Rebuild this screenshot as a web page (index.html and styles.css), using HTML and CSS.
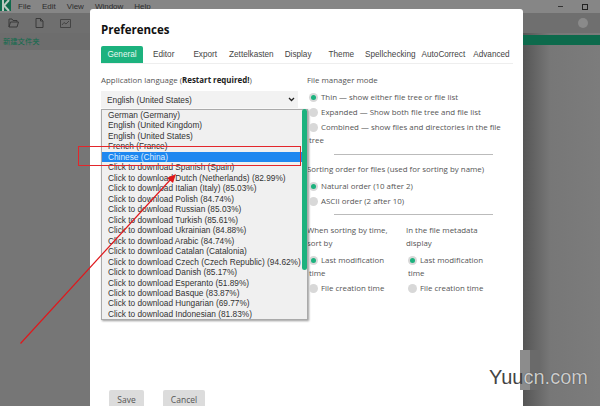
FILE: index.html
```html
<!DOCTYPE html>
<html lang="en">
<head>
<meta charset="utf-8">
<title>Preferences</title>
<link rel="stylesheet" href="styles.css">
</head>
<body>
<div class="app">
  <header class="titlebar">
    <div class="logo"><svg width="11" height="13" viewBox="0 0 11 13"><path d="M3 1v11M9 1 4 6.500 9 12" fill="none" stroke="#b9c9c0" stroke-width="2"/></svg></div>
    <nav class="menu"><span>File</span><span>Edit</span><span>View</span><span>Window</span><span>Help</span></nav>
    <div class="winctl"><span class="min"></span><span class="max"></span></div>
  </header>
  <div class="toolbar">
    <svg class="tool" width="11" height="10" viewBox="0 0 11 10"><path d="M1 9V1h3l1 1.500h4V4M1 9l1.500-5h8L9 9z" fill="none" stroke="#3a3a3a" stroke-width="1"/></svg>
    <svg class="tool" width="9" height="10" viewBox="0 0 9 10"><path d="M1 .5h4.500L8 3v6.500H1zM5.500 .5V3H8" fill="none" stroke="#3a3a3a" stroke-width="1"/></svg>
    <svg class="tool" width="11" height="9" viewBox="0 0 11 9"><path d="M.5 .5h10v8H.5zM2 6l2-2.500L6 5l3-3" fill="none" stroke="#3a3a3a" stroke-width=".8"/></svg>
    <div class="search-dot"></div>
  </div>
  <div class="workspace">
    <aside class="sidebar"><div class="folder">新建文件夹</div></aside>
    <main class="editor"><div class="greenbar"></div></main>
  </div>
</div>

<section class="dialog">
  <h1 class="title">Preferences</h1>
  <div class="tabs">
    <span class="tab active">General</span><span class="tab t-editor">Editor</span><span class="tab t-export">Export</span><span class="tab t-zk">Zettelkasten</span><span class="tab t-display">Display</span><span class="tab t-theme">Theme</span><span class="tab t-spell">Spellchecking</span><span class="tab t-auto">AutoCorrect</span><span class="tab t-adv">Advanced</span>
  </div>
  <div class="columns">
    <div class="col-left">
      <p class="label">Application language (<b>Restart required!</b>)</p>
      <div class="select">English (United States)<svg width="7" height="5" viewBox="0 0 7 5"><path d="M1 1l2.500 2.500L6 1" fill="none" stroke="#222" stroke-width="1.300"/></svg></div>
      <div class="dropdown">
        <div>German (Germany)</div>
        <div>English (United Kingdom)</div>
        <div>English (United States)</div>
        <div>French (France)</div>
        <div class="sel">Chinese (China)</div>
        <div>Click to download Spanish (Spain)</div>
        <div>Click to download Dutch (Netherlands) (82.99%)</div>
        <div>Click to download Italian (Italy) (85.03%)</div>
        <div>Click to download Polish (84.74%)</div>
        <div>Click to download Russian (85.03%)</div>
        <div>Click to download Turkish (85.61%)</div>
        <div>Click to download Ukrainian (84.88%)</div>
        <div>Click to download Arabic (84.74%)</div>
        <div>Click to download Catalan (Catalonia)</div>
        <div>Click to download Czech (Czech Republic) (94.62%)</div>
        <div>Click to download Danish (85.17%)</div>
        <div>Click to download Esperanto (51.89%)</div>
        <div>Click to download Basque (83.87%)</div>
        <div>Click to download Hungarian (69.77%)</div>
        <div>Click to download Indonesian (81.83%)</div>
      </div>
      <div class="scrollbar"></div>
    </div>
    <div class="col-right">
      <p class="label">File manager mode</p>
      <div class="radio on"><i></i>Thin — show either file tree or file list</div>
      <div class="radio"><i></i>Expanded — Show both file tree and file list</div>
      <div class="radio wrap"><i></i>Combined — show files and directories in the file tree</div>
      <hr class="rule">
      <p class="label">Sorting order for files (used for sorting by name)</p>
      <div class="radio on"><i></i>Natural order (10 after 2)</div>
      <div class="radio"><i></i>ASCII order (2 after 10)</div>
      <hr class="rule">
      <div class="pair">
        <div class="pair-col">
          <p class="label">When sorting by time, sort by</p>
          <div class="radio wrap on"><i></i>Last modification time</div>
          <div class="radio"><i></i>File creation time</div>
        </div>
        <div class="pair-col">
          <p class="label">In the file metadata display</p>
          <div class="radio wrap on"><i></i>Last modification time</div>
          <div class="radio"><i></i>File creation time</div>
        </div>
      </div>
    </div>
  </div>
  <div class="actions"><button class="btn">Save</button><button class="btn btn-cancel">Cancel</button></div>
</section>

<div class="marker"></div>
<svg class="arrow" width="600" height="406" viewBox="0 0 600 406"><path d="M20.500 343.500 171 179" fill="none" stroke="#e0181c" stroke-width="1.200"/><path d="M176 174l-3 9-6-5z" fill="#e0181c"/></svg>
<div class="wm-block"></div>
<div class="watermark">Yuu<span class="wm-light">cn.com</span></div>
</body>
</html>
```
FILE: styles.css
```css
* { box-sizing: border-box; }
html, body { margin: 0; padding: 0; width: 600px; height: 406px; overflow: hidden; }
body { position: relative; font-family: "Open Sans", sans-serif; color: #333; background: #7a7a7a; }

.app { display: flex; flex-direction: column; height: 406px; }
.titlebar { display: flex; align-items: center; height: 13px; background: #868686; font: 8px "Liberation Sans", sans-serif; color: #2c2c2c; }
.logo { width: 11px; height: 11px; align-self: flex-start; background: #0f6a4c; display: flex; align-items: center; justify-content: center; overflow: hidden; }
.menu { display: flex; gap: 11px; margin-left: 7px; }
.winctl { margin-left: auto; display: flex; align-items: center; gap: 19px; margin-right: 12px; }
.min { width: 5px; height: 1px; background: #333; }
.max { width: 6px; height: 6px; border: 1px solid #222; }
.toolbar { display: flex; align-items: center; gap: 16px; height: 20px; padding: 0 0 0 8px; background: #6f6f6f; }
.tool { flex: none; }
.search-dot { width: 10px; height: 10px; margin-left: auto; margin-right: 12px; border-radius: 50%; background: #8a8a8a; }
.workspace { flex: 1; display: flex; min-height: 0; }
.sidebar { width: 90px; background: #767676; }
.folder { height: 17px; padding-left: 3px; background: #6d6d6d; font: 7.300px/17px "Noto Sans CJK SC", sans-serif; color: #0d6b4c; }
.editor { flex: 1; background: linear-gradient(90deg, #555 433px, #777 460px, #7c7c7c 100%); }
.greenbar { height: 10px; margin-top: 2px; background: #0d6a4c; }

.dialog { position: absolute; left: 90px; top: 9px; width: 433px; height: 397px; padding: 11px 10px 0 11px; background: #fff; border-radius: 3px 3px 0 0; display: flex; flex-direction: column; overflow: hidden; }
.title { margin: 0; font: 700 11.500px/20px "Open Sans", sans-serif; color: #111; }
.tabs { display: flex; height: 18px; margin-top: 6px; border-bottom: 1px solid #eee; font: 8.200px/17px "Liberation Sans", sans-serif; color: #444; }
.tab { flex: none; }
.tab.active { width: 42px; height: 17px; text-align: center; background: #1cb27e; color: #e8f7f1; border-radius: 2px 2px 0 0; }
.t-editor { margin-left: 10px; }
.t-export { margin-left: 19px; }
.t-zk { margin-left: 12px; }
.t-display { margin-left: 11px; }
.t-theme { margin-left: 17px; }
.t-spell { margin-left: 11px; }
.t-auto { margin-left: 6px; }
.t-adv { margin-left: 8px; }

.columns { display: flex; gap: 10px; margin-top: 10px; flex: 1; min-height: 0; }
.col-left { position: relative; width: 196px; flex: none; }
.col-right { width: 196px; flex: none; }
.label { margin: 0; font: 7.900px/12.500px "Open Sans", sans-serif; color: #555; }
.label b { color: #222; }
.select { display: flex; justify-content: space-between; align-items: center; width: 197px; height: 17px; margin-top: 4.500px; padding: 0 3px 0 6px; background: #f2f2f2; font: 8.300px "Liberation Sans", sans-serif; color: #333; }

.dropdown { position: absolute; left: 0; top: 35px; width: 207px; height: 211px; background: #f0f0f0; border: 1px solid #aaa; box-shadow: 1px 1px 2px rgba(0,0,0,.4); font: 8.300px/10.470px "Liberation Sans", sans-serif; color: #333; white-space: nowrap; }
.dropdown div { padding-left: 6px; }
.dropdown .sel { background: #1e87f0; color: #dfeeff; }
.scrollbar { position: absolute; left: 201px; top: 35px; width: 5px; height: 161px; background: #1cb27e; border-radius: 3px; }

.radio { position: relative; margin-top: 2.500px; padding-left: 14px; font: 7.900px/12.500px "Open Sans", sans-serif; color: #555; min-height: 12.500px; }
.label + .radio { margin-top: 4.500px; }
.radio i { position: absolute; left: 2px; top: 2px; width: 9px; height: 9px; border-radius: 50%; background: #d8d8d8; }
.radio.on i::after { content: ""; position: absolute; left: 2px; top: 2px; width: 5px; height: 5px; border-radius: 50%; background: #1cb27e; }
.radio.wrap { padding-left: 2px; text-indent: 12px; line-height: 13px; }
.rule { width: 159px; margin: 6.500px 0 8.750px 27px; border: 0; border-top: 1px solid #bbb; }
.pair { display: flex; gap: 18px; }
.pair-col { width: 81px; flex: none; }

.actions { display: flex; gap: 19px; height: 16px; margin-left: 8px; flex: none; }
.btn { width: 35px; height: 26px; padding: 0 0 8px; border: 0; background: #dcdcdc; border-radius: 2px; font: 8.500px "Open Sans", sans-serif; color: #555; }
.btn-cancel { width: 42px; }

.marker { position: absolute; left: 78px; top: 146px; width: 223px; height: 20px; border: 1.500px solid #e3262b; }
.arrow { position: absolute; left: 0; top: 0; pointer-events: none; }
.wm-block { position: absolute; left: 520px; top: 350px; width: 20px; height: 40px; background: linear-gradient(90deg, #8c8c8c 50%, #6a6a6a 50%); }
.watermark { position: absolute; left: 489px; top: 364px; font: 20px/26px "Liberation Sans", sans-serif; color: #444; }
.wm-light { color: #ccc; text-shadow: 0 0 1px #333; }
```
